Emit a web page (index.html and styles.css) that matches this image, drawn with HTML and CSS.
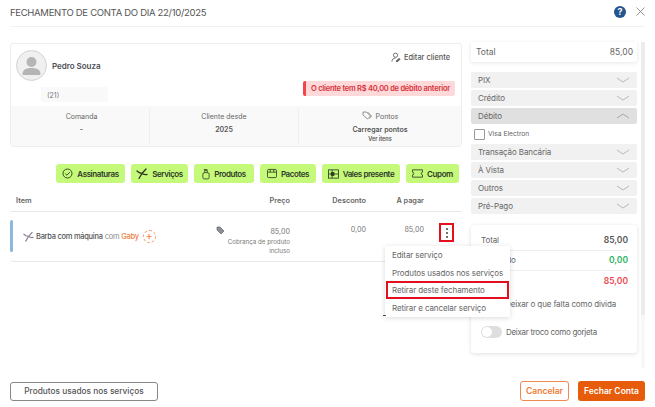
FILE: index.html
```html
<!DOCTYPE html>
<html lang="pt-BR">
<head>
<meta charset="utf-8">
<title>Fechamento de conta</title>
<link rel="stylesheet" href="styles.css">
</head>
<body>
<div class="modal">
  <header class="head">
    <h1 class="title">FECHAMENTO DE CONTA DO DIA 22/10/2025</h1>
    <span class="help">?</span>
    <svg class="close" width="9" height="9" viewBox="0 0 9 9"><path d="M.5.5l8 8M8.5.5l-8 8" stroke="#777" stroke-width=".8" fill="none"/></svg>
  </header>
  <div class="body">
    <main class="left">
      <section class="client">
        <div class="client-top">
          <div class="who">
            <div class="name-line">
              <svg class="avatar" width="31" height="31" viewBox="0 0 31 31"><circle cx="15.5" cy="15.5" r="15" fill="#f0f0f0" stroke="#c9c9c9" stroke-width=".8"/><circle cx="15.5" cy="12" r="5" fill="#b5b5b5"/><path d="M6.5 24c0-4.500 4-6 9-6s9 1.500 9 6c0 .8-.5 1-1 1H7.500c-.5 0-1-.2-1-1z" fill="#b5b5b5"/></svg>
              <span class="name">Pedro Souza</span>
            </div>
            <div class="phone">(21)</div>
          </div>
          <div class="client-side">
            <div class="edit">
              <svg width="10" height="11" viewBox="0 0 11 11" fill="none" stroke="#555" stroke-width=".9"><circle cx="5" cy="3" r="2.300"/><path d="M1 10c0-2.500 1.500-3.800 4-3.800"/><path d="M5.500 9.500l3.500-3 1 1-3.500 3z" fill="#555"/></svg>
              Editar cliente
            </div>
            <div class="alert">O cliente tem R$ 40,00 de débito anterior</div>
          </div>
        </div>
        <div class="stats">
          <div class="stat stat-first"><span class="stat-label">Comanda</span><b class="stat-val">-</b></div>
          <div class="stat"><span class="stat-label">Cliente desde</span><b class="stat-val">2025</b></div>
          <div class="stat">
            <span class="stat-label"><svg class="tag" width="10" height="9" viewBox="0 0 10 9" fill="none" stroke="#777" stroke-width=".8"><path d="M1 1h3.500l4 4-3 3-4.500-4z"/><path d="M5.500 1l4 4-2 2.500"/></svg> Pontos</span>
            <b class="stat-val">Carregar pontos</b>
            <b class="stat-sub">Ver itens</b>
          </div>
        </div>
      </section>
      <nav class="actions">
        <button class="act w-ass"><svg width="11" height="11" viewBox="0 0 11 11" fill="none" stroke="#2c3a1e" stroke-width=".9"><circle cx="5.500" cy="5.500" r="4.500"/><path d="M3.300 5.700l1.600 1.500 2.900-3"/></svg>Assinaturas</button>
        <button class="act w-srv"><svg width="12" height="11" viewBox="0 0 12 11" fill="none" stroke="#2c3a1e" stroke-width="1.300" stroke-linecap="round"><path d="M3 10.500L6 5.500L10 1M6 5.500Q3 5 1 3M6 5.500Q8.500 7 11 6.500"/></svg>Serviços</button>
        <button class="act w-pro"><svg width="8" height="12" viewBox="0 0 9 12" fill="none" stroke="#2c3a1e" stroke-width=".9"><rect x="1" y="4.500" width="7" height="7" rx="1.500"/><path d="M3 4.500V2h3v2.500M2 1h4"/></svg>Produtos</button>
        <button class="act w-pac"><svg width="10" height="11" viewBox="0 0 11 11" fill="none" stroke="#2c3a1e" stroke-width=".9"><rect x=".5" y="1" width="10" height="9" rx="1.500"/><path d="M.5 4h10M3.500 1v3M7.500 1v3"/></svg>Pacotes</button>
        <button class="act w-val"><svg width="11" height="10" viewBox="0 0 12 10" fill="none" stroke="#2c3a1e" stroke-width=".9"><rect x=".5" y=".5" width="11" height="9"/><path d="M.5 5h11M4.500.5v9"/><rect x="3.500" y="3.500" width="3" height="3" fill="#2c3a1e"/></svg>Vales presente</button>
        <button class="act w-cup"><svg width="11" height="9" viewBox="0 0 12 9" fill="none" stroke="#2c3a1e" stroke-width=".9"><path d="M.5.5h11v2.500a1.500 1.500 0 0 0 0 3v2.500H.5V6a1.500 1.500 0 0 0 0-3z"/></svg>Cupom</button>
      </nav>
      <div class="thead">
        <span class="c-item">Item</span>
        <span class="c-price">Preço</span>
        <span class="c-disc">Desconto</span>
        <span class="c-pay">A pagar</span>
      </div>
      <div class="row">
        <div class="c-item item">
          <svg class="srv" width="11" height="11" viewBox="0 0 12 11" fill="none" stroke="#8a7f96" stroke-width="1.300" stroke-linecap="round"><path d="M3 10.500L6 5.500L10 1M6 5.500Q3 5 1 3M6 5.500Q8.500 7 11 6.500"/></svg>
          <span class="srv-name">Barba com máquina</span><span class="com">com</span><span class="pro">Gaby</span>
          <span class="plus">+</span>
        </div>
        <div class="c-price price">
          <svg class="tag2" width="9" height="9" viewBox="0 0 9 9"><path d="M1 1h3l4 4-3 3-4-4z" fill="#8a8f96" stroke="#555" stroke-width=".6"/></svg>
          <span class="price-val">85,00</span>
          <small class="price-note">Cobrança de produto incluso</small>
        </div>
        <div class="c-disc num">0,00</div>
        <div class="c-pay num">85,00</div>
        <div class="kebab"><i></i><i></i><i></i></div>
        <ul class="menu">
          <li>Editar serviço</li>
          <li>Produtos usados nos serviços</li>
          <li class="marked">Retirar deste fechamento</li>
          <li>Retirar e cancelar serviço</li>
        </ul>
      </div>
    </main>
    <aside class="right">
      <div class="total-card"><span>Total</span><span>85,00</span></div>
      <div class="acc">
        <div class="acc-row">PIX<svg class="chev" width="14" height="6" viewBox="0 0 14 6"><path d="M1 1l6 4 6-4" fill="none" stroke="#aaa" stroke-width=".8"/></svg></div>
        <div class="acc-row">Crédito<svg class="chev" width="14" height="6" viewBox="0 0 14 6"><path d="M1 1l6 4 6-4" fill="none" stroke="#aaa" stroke-width=".8"/></svg></div>
        <div class="acc-row open">Débito<svg class="chev" width="14" height="6" viewBox="0 0 14 6"><path d="M1 5l6-4 6 4" fill="none" stroke="#999" stroke-width=".8"/></svg></div>
        <label class="check"><span class="box"></span>Visa Electron</label>
        <div class="acc-row">Transação Bancária<svg class="chev" width="14" height="6" viewBox="0 0 14 6"><path d="M1 1l6 4 6-4" fill="none" stroke="#aaa" stroke-width=".8"/></svg></div>
        <div class="acc-row">À Vista<svg class="chev" width="14" height="6" viewBox="0 0 14 6"><path d="M1 1l6 4 6-4" fill="none" stroke="#aaa" stroke-width=".8"/></svg></div>
        <div class="acc-row">Outros<svg class="chev" width="14" height="6" viewBox="0 0 14 6"><path d="M1 1l6 4 6-4" fill="none" stroke="#aaa" stroke-width=".8"/></svg></div>
        <div class="acc-row">Pré-Pago<svg class="chev" width="14" height="6" viewBox="0 0 14 6"><path d="M1 1l6 4 6-4" fill="none" stroke="#aaa" stroke-width=".8"/></svg></div>
      </div>
      <div class="sum">
        <div class="sum-row"><span>Total</span><b>85,00</b></div>
        <div class="sum-row"><span>Recebido</span><b class="green">0,00</b></div>
        <div class="sum-row plain"><span>Falta</span><b class="red">85,00</b></div>
        <div class="opt opt-debt">Deixar o que falta como divida</div>
        <div class="opt opt-tip"><span class="toggle"></span>Deixar troco como gorjeta</div>
      </div>
    </aside>
    <div class="scroll"><div class="thumb"></div></div>
  </div>
  <footer class="foot">
    <button class="btn-used">Produtos usados nos serviços</button>
    <div class="foot-right">
      <button class="btn-cancel">Cancelar</button>
      <button class="btn-close">Fechar Conta</button>
    </div>
  </footer>
</div>
</body>
</html>
```
FILE: styles.css
```css
* { box-sizing: border-box; }
html, body { margin: 0; height: 100%; }
body { background: #fff; font-family: Inter, "Liberation Sans", sans-serif; color: #555; overflow: hidden; }
.modal { width: 655px; height: 407px; display: flex; flex-direction: column; padding: 0 10px 6px; }

.head { height: 27px; display: flex; align-items: center; border-bottom: 1px solid #f1f1f1; flex: none; }
.title { margin: 0; font-size: 9.500px; letter-spacing: -.3px; font-weight: 400; color: #555; flex: 1; white-space: nowrap; padding-bottom: 1px; }
.help { width: 12px; height: 12px; border-radius: 50%; background: #24558f; color: #fff; font-size: 9px; font-weight: 700; display: flex; align-items: center; justify-content: center; margin-right: 10px; margin-top: -3px; }
.close { margin-top: -3px; }

.body { display: flex; flex: 1; padding-top: 15px; min-height: 0; }
.left { width: 452px; flex: none; padding-top: 1px; }
.right { width: 166px; margin-left: 9px; flex: none; }
.scroll { width: 4px; margin-left: 4px; height: 326px; background: #f8f8f8; }
.thumb { height: 273px; background: #ececec; }

.client { height: 104px; border: 1px solid #eee; border-radius: 3px; display: flex; flex-direction: column; }
.client-top { height: 65px; display: flex; justify-content: space-between; padding: 6px 6px 0 5px; }
.name-line { display: flex; align-items: center; gap: 5px; }
.name { font-size: 8px; font-weight: 600; color: #4d4d55; letter-spacing: -.03px; }
.phone { margin: 6px 0 0 25px; width: 67px; height: 15px; background: #f9f9f9; border-radius: 2px; font-size: 7px; color: #777; padding: 4px 6px; }
.client-side { display: flex; flex-direction: column; align-items: flex-end; }
.edit { display: flex; align-items: center; gap: 3px; font-size: 7.400px; font-weight: 500; color: #555; margin: 2px 5px 0 0; height: 11px; white-space: nowrap; }
.alert { margin-top: 18px; width: 152px; height: 15px; background: #fdd9d9; border-left: 3px solid #f0454b; border-radius: 2px; color: #d8313a; font-size: 7.500px; letter-spacing: -.25px; font-weight: 600; display: flex; align-items: center; justify-content: center; white-space: nowrap; }
.stats { flex: 1; background: #f9f9f9; display: grid; grid-template-columns: 139px 149px 1fr; padding: 3px 0; }
.stat { display: flex; flex-direction: column; align-items: center; border-right: 1px solid #eee; padding-top: 2px; }
.stat-first { padding-left: 3px; }
.stat:last-child { border-right: 0; }
.stat-label { font-size: 7px; color: #666; height: 11px; line-height: 11px; }
.stat-val { font-size: 7px; font-weight: 600; color: #555; margin-top: 3px; line-height: 9px; }
.stat-sub { font-size: 5.500px; font-weight: 600; color: #555; margin-top: 2px; line-height: 7px; }
.tag { vertical-align: -1px; margin-right: 2px; }

.actions { display: flex; justify-content: flex-end; gap: 6px; margin-top: 17px; padding-right: 3px; }
.act { height: 19px; border: 0; border-radius: 3px; background: #c4f97a; color: #2f3a28; font: 600 8px Inter, sans-serif; letter-spacing: -.42px; padding: 0; display: flex; align-items: center; justify-content: center; gap: 4px; white-space: nowrap; }
.w-ass { width: 69px; }
.w-srv { width: 57px; }
.w-pro { width: 60px; }
.w-pac { width: 56px; }
.w-val { width: 78px; }
.w-cup { width: 53px; }

.thead { display: flex; align-items: center; height: 20px; margin-top: 9px; padding-bottom: 2px; border-bottom: 1px solid #e8e8e8; font-size: 7.300px; font-weight: 600; color: #666; }
.c-item { width: 0; flex: 1; padding-left: 6px; }
.c-price { width: 90px; text-align: right; flex: none; }
.c-disc { width: 76px; text-align: right; flex: none; }
.c-pay { width: 58px; text-align: right; flex: none; }
.thead .c-pay { margin-right: 38px; }
.row { height: 50px; border-bottom: 1px solid #e8e8e8; border-radius: 4px; display: flex; position: relative; padding-top: 8px; }
.row::before { content: ""; width: 3px; height: 32px; background: #8bb8de; border-radius: 2px; flex: none; }
.item { display: flex; align-items: center; height: 32px; padding-left: 10px; font-size: 7.500px; letter-spacing: -.28px; white-space: nowrap; gap: 2px; }
.srv { margin-right: 0; }
.srv-name { font-weight: 500; color: #555; }
.com { color: #888; }
.pro { color: #f08040; font-weight: 500; }
.plus { width: 13px; height: 13px; border: 1px dashed #f09868; border-radius: 50%; color: #f08040; font-size: 11px; line-height: 10px; letter-spacing: 0; text-align: center; margin-left: 2px; }
.price { position: relative; display: flex; flex-direction: column; align-items: flex-end; padding-top: 7px; }
.tag2 { position: absolute; left: 16px; top: 6px; }
.price-val { font-size: 7.200px; color: #777; line-height: 10px; }
.price-note { font-size: 6.200px; color: #777; width: 64px; line-height: 8.500px; margin-top: 1px; }
.num { font-size: 7.200px; color: #777; padding-top: 5px; line-height: 10px; }
.kebab { width: 15px; height: 19px; border: 2px solid #e3101d; margin: 3px 8px 0 15px; flex: none; display: flex; flex-direction: column; align-items: center; justify-content: center; gap: 2px; }
.kebab i { width: 2px; height: 2px; border-radius: 50%; background: #444; }
.menu { position: absolute; left: 375px; top: 34px; width: 125px; height: 71px; margin: 0; padding: 0; list-style: none; background: #fff; box-shadow: 0 1px 5px rgba(0,0,0,.15); font-size: 8px; letter-spacing: -.1px; color: #666; z-index: 2; }
.menu li { height: 17.700px; display: flex; align-items: center; padding-left: 4px; border: 2px solid transparent; margin: 0 1px; white-space: nowrap; }
.menu .marked { border-color: #e3101d; }
.menu::before { content: ""; position: absolute; left: -2px; top: 69px; width: 3px; height: 1px; background: #444; }

.total-card { height: 20px; display: flex; justify-content: space-between; align-items: center; padding: 0 4px 0 5px; font-size: 8.500px; color: #666; box-shadow: 0 1px 4px rgba(0,0,0,.1); border-radius: 3px; background: #fff; }
.acc { margin-top: 10px; display: flex; flex-direction: column; }
.acc-row { height: 16px; margin-bottom: 2px; background: #f1f1f1; border-radius: 2px; display: flex; justify-content: space-between; align-items: center; padding: 0 7px; font-size: 8px; letter-spacing: -.1px; color: #666; white-space: nowrap; }
.acc-row.open { background: #e0e0e0; margin-bottom: 0; }
.check { height: 20px; display: flex; align-items: center; font-size: 6.700px; color: #666; padding-left: 3px; gap: 3px; }
.box { width: 11px; height: 11px; border: 1px solid #999; border-radius: 1px; background: #fff; }
.sum { margin-top: 9px; height: 128px; border-radius: 3px; box-shadow: 0 1px 4px rgba(0,0,0,.13); padding: 5px 9px 0 10px; background: #fff; }
.sum-row { height: 20.500px; display: flex; justify-content: space-between; align-items: center; font-size: 8px; letter-spacing: -.1px; color: #666; border-bottom: 1px solid #eee; }
.sum-row b { font-weight: 600; font-size: 8.500px; letter-spacing: 0; color: #555; }
.sum-row.plain { border-bottom: 0; }
.sum-row b.green { color: #2bb45c; }
.sum-row b.red { color: #ee4550; }
.opt { font-size: 8px; letter-spacing: -.13px; color: #666; display: flex; align-items: center; }
.opt-debt { padding-left: 24px; margin-top: 7px; height: 23px; align-items: flex-start; }
.opt-tip { gap: 4px; margin-top: 4px; letter-spacing: -.3px; }
.toggle { width: 21px; height: 12px; border-radius: 6px; background: #dedede; position: relative; }
.toggle::after { content: ""; position: absolute; left: 1px; top: 1px; width: 10px; height: 10px; border-radius: 50%; background: #fff; }

.foot { display: flex; justify-content: space-between; align-items: center; flex: none; height: 20px; }
.foot button { font-family: Inter, sans-serif; }
.btn-used { width: 148px; height: 19px; background: #fff; border: 1px solid #888; border-radius: 3px; font-size: 8.300px; font-weight: 500; color: #555; white-space: nowrap; padding: 0; }
.foot-right { display: flex; gap: 9px; }
.btn-cancel { width: 49px; height: 20px; background: #fff; border: 1px solid #ef8a50; border-radius: 3px; color: #ee7a35; font-size: 8.500px; font-weight: 600; padding: 0; }
.btn-close { width: 67px; height: 20px; background: #e65c0a; border: 0; border-radius: 3px; color: #fff; font-size: 8.500px; font-weight: 600; padding: 0; }
```
